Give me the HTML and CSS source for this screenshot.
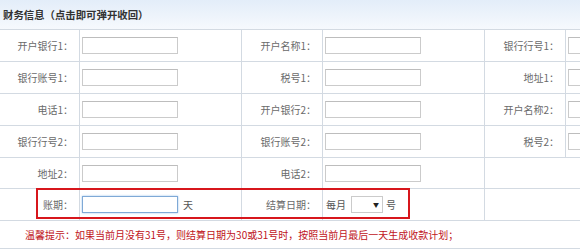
FILE: index.html
```html
<!DOCTYPE html>
<html lang="zh-CN">
<head>
    <meta charset="UTF-8">
    <meta name="viewport" content="width=device-width, initial-scale=1.0">
    <title>财务信息</title>
    <link rel="stylesheet" href="styles.css">
</head>
<body>

<div class="panel">
    <div class="panel-head">财务信息（点击即可弹开收回）</div>
    <table class="form-table">
        <colgroup>
            <col class="c-label1">
            <col class="c-field">
            <col class="c-label">
            <col class="c-field">
            <col class="c-label">
            <col class="c-last">
        </colgroup>
        <tr>
            <th>开户银行1：</th><td><input type="text" class="txt"></td>
            <th>开户名称1：</th><td><input type="text" class="txt"></td>
            <th>银行行号1：</th><td><input type="text" class="txt"></td>
        </tr>
        <tr>
            <th>银行账号1：</th><td><input type="text" class="txt"></td>
            <th>税号1：</th><td><input type="text" class="txt"></td>
            <th>地址1：</th><td><input type="text" class="txt"></td>
        </tr>
        <tr>
            <th>电话1：</th><td><input type="text" class="txt"></td>
            <th>开户银行2：</th><td><input type="text" class="txt"></td>
            <th>开户名称2：</th><td><input type="text" class="txt"></td>
        </tr>
        <tr>
            <th>银行行号2：</th><td><input type="text" class="txt"></td>
            <th>银行账号2：</th><td><input type="text" class="txt"></td>
            <th>税号2：</th><td><input type="text" class="txt"></td>
        </tr>
        <tr class="row-short">
            <th>地址2：</th><td><input type="text" class="txt"></td>
            <th>电话2：</th><td><input type="text" class="txt"></td>
            <td colspan="2"></td>
        </tr>
        <tr>
            <th>账期：</th><td><input type="text" class="txt focus"><span class="unit">天</span></td>
            <th>结算日期：</th>
            <td>
                <span class="unit-l">每月</span><span class="sel-wrap"><select class="sel"><option></option></select></span><span class="unit unit-s">号</span>
            </td>
            <td colspan="2"></td>
        </tr>
        <tr class="row-tip">
            <td colspan="6" class="tip">温馨提示：如果当前月没有31号，则结算日期为30或31号时，按照当前月最后一天生成收款计划；</td>
        </tr>
    </table>
    <div class="highlight"></div>
</div>

</body>
</html>
```

FILE: styles.css
```css
html, body {
    margin: 0;
    padding: 0;
    background-color: #fff;
    overflow: hidden;
}
body {
    font-family: "Noto Sans CJK SC", "Liberation Sans", sans-serif;
    font-size: 10px;
    color: #6a6a6a;
}
.panel {
    position: relative;
    width: 580px;
    overflow: hidden;
}
.panel-head {
    height: 29px;
    line-height: 29px;
    padding-left: 3px;
    font-size: 10.4px;
    font-weight: bold;
    color: #333;
    background: linear-gradient(#e3edf9, #f6f9fd);
    border-bottom: 1px solid #d3dae2;
}
.form-table {
    table-layout: fixed;
    width: 666px;
    border-collapse: separate;
    border-spacing: 0;
}
.c-label1 { width: 80px; }
.c-label { width: 81px; }
.c-field { width: 162px; }
.c-last { width: 100px; }
.form-table th,
.form-table td {
    box-sizing: border-box;
    height: 32px;
    padding: 0;
    border-right: 1px solid #d3dae2;
    border-bottom: 1px solid #d3dae2;
    white-space: nowrap;
}
.form-table th {
    font-weight: normal;
    text-align: right;
    padding-right: 6px;
}
.form-table td {
    padding-left: 2px;
}
.row-short th,
.row-short td {
    height: 31px;
}
.txt {
    box-sizing: border-box;
    width: 96px;
    height: 17px;
    margin: 0;
    padding: 0 2px;
    border: 1px solid #cbcbcb;
    border-top-color: #bdbdbd;
    vertical-align: middle;
    font-size: 10px;
}
.txt.focus {
    border-color: #7fa9d6;
    box-shadow: 0 0 2px #9dc4ec;
}
.unit {
    margin-left: 5px;
    vertical-align: middle;
    color: #555;
}
.unit-s {
    margin-left: 3px;
}
.unit-l {
    margin-left: 1px;
    margin-right: 5px;
    vertical-align: middle;
    color: #555;
}
.sel-wrap {
    position: relative;
    display: inline-block;
    vertical-align: middle;
}
.sel {
    display: block;
    box-sizing: border-box;
    width: 32px;
    height: 17px;
    margin: 0;
    border: 1px solid #cbcbcb;
    background: #fff;
    appearance: none;
    -webkit-appearance: none;
}
.sel-wrap::after {
    content: "▼";
    position: absolute;
    right: 4px;
    top: 4px;
    font-size: 6px;
    line-height: 9px;
    color: #222;
}
.row-tip td {
    height: 28px;
    border-right: none;
}
.tip {
    padding-left: 25px !important;
    color: #c0141b;
}
.highlight {
    position: absolute;
    left: 36px;
    top: 188px;
    width: 374px;
    height: 31px;
    box-sizing: border-box;
    border: 2px solid #d7161c;
}
```
